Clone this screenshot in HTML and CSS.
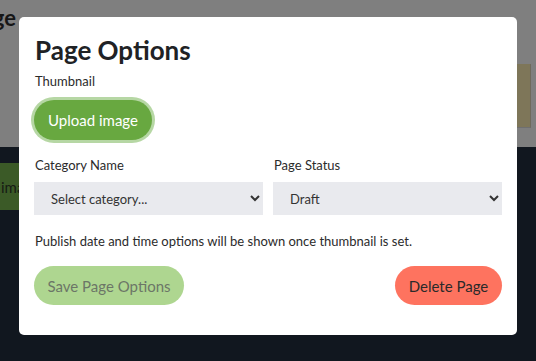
FILE: index.html
```html
<!DOCTYPE html>
<html lang="en">
<head>
    <meta charset="UTF-8">
    <meta name="viewport" content="width=device-width, initial-scale=1.0">
    <title>Page Options</title>
    <link rel="stylesheet" href="styles.css">
</head>
<body>
    <!-- page behind the overlay -->
    <div class="page">
        <div class="page-top">
            <div class="page-title"><span>Edit Page</span></div>
            <div class="page-side">
                <div class="side-panel"></div>
            </div>
        </div>
        <div class="page-dark">
            <div class="bg-button"><span>Upload image</span></div>
        </div>
    </div>

    <div class="modal">
        <h2 class="modal-title">Page Options</h2>

        <label class="field-label">Thumbnail</label>
        <button class="btn btn-upload">Upload image</button>

        <div class="field-row">
            <div class="field">
                <label class="field-label" for="category">Category Name</label>
                <select id="category" class="select">
                    <option>Select category...</option>
                </select>
            </div>
            <div class="field">
                <label class="field-label" for="status">Page Status</label>
                <select id="status" class="select">
                    <option>Draft</option>
                    <option>Published</option>
                </select>
            </div>
        </div>

        <p class="note">Publish date and time options will be shown once thumbnail is set.</p>

        <div class="actions">
            <button class="btn btn-save" disabled>Save Page Options</button>
            <button class="btn btn-delete">Delete Page</button>
        </div>
    </div>
</body>
</html>
```

FILE: styles.css
```css
body {
    margin: 0;
    font-family: Lato, "Open Sans", sans-serif;
    background-color: #11171f;
    width: 536px;
    height: 361px;
    overflow: hidden;
    position: relative;
}

.page-top {
    height: 147px;
    background-color: #7f7f7f;
    display: flex;
    justify-content: space-between;
}

.page-title {
    width: 16px;
    display: flex;
    justify-content: flex-end;
    white-space: nowrap;
    padding-top: 4px;
    font-size: 22px;
    font-weight: 700;
    color: #161616;
}

.page-side {
    width: 19px;
    padding-top: 64px;
}

.side-panel {
    width: 13px;
    height: 63px;
    background-color: #7e7659;
    border-right: 1px solid #6e6a5c;
    border-bottom: 1px solid #6f6f6f;
}

.page-dark {
    padding-top: 16px;
}

.bg-button {
    width: 40px;
    height: 47px;
    background-color: #3b5a27;
    display: flex;
    justify-content: flex-end;
    align-items: center;
    white-space: nowrap;
    overflow: hidden;
    font-size: 15px;
    color: #161b14;
}

/* modal */
.modal {
    position: absolute;
    top: 17px;
    left: 19px;
    width: 498px;
    height: 318px;
    box-sizing: border-box;
    padding: 13px 15px 0 15px;
    background-color: #fff;
    border-radius: 5px;
    color: #222;
}

.modal-title {
    margin: 0 0 0 1px;
    font-size: 26px;
    font-weight: 700;
    line-height: 40px;
    color: #202225;
}

.field-label {
    display: block;
    font-size: 13px;
    line-height: 18px;
    margin: 2px 0 0 1px;
    color: #2b2b2b;
}

.btn {
    font-family: inherit;
    font-size: 15px;
    border: none;
    border-radius: 20px;
    height: 39px;
    padding: 0;
    white-space: nowrap;
    cursor: pointer;
}

.btn-upload {
    display: block;
    margin-top: 10px;
    width: 118px;
    height: 40px;
    background-color: #68a840;
    color: #fff;
    box-shadow: 0 0 0 3px #b6d7a4;
}

.field-row {
    display: flex;
    gap: 10px;
    margin-top: 16px;
}

.field {
    flex: 1;
}

.field .field-label {
    margin-top: 0;
}

.select {
    display: block;
    width: 100%;
    height: 33px;
    margin-top: 8px;
    padding: 0 10px 0 13px;
    border: none;
    border-radius: 0;
    background-color: #e9eaee;
    font-family: inherit;
    font-size: 13px;
    color: #333;
}

.note {
    font-size: 13px;
    line-height: 18px;
    margin: 17px 0 0 1px;
    color: #2b2b2b;
}

.actions {
    display: flex;
    justify-content: space-between;
    margin-top: 16px;
}

.btn-save {
    width: 150px;
    background-color: #aed690;
    color: #6c7667;
}

.btn-delete {
    width: 107px;
    background-color: #fe735f;
    color: #2a2a2a;
}
```
